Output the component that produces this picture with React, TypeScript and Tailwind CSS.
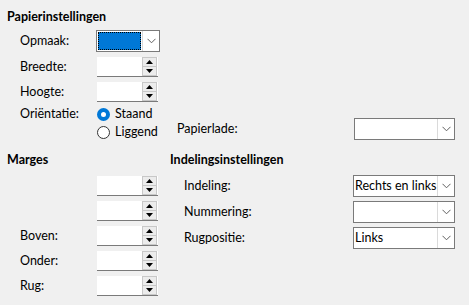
import React from "react";

function Chevron() {
  return (
    <svg width="9" height="6" viewBox="0 0 9 6" className="block">
      <path d="M0.5 0.8 L4.5 4.8 L8.5 0.8" fill="none" stroke="#606060" strokeWidth="1" />
    </svg>
  );
}

function Tri({ up }: { up?: boolean }) {
  return (
    <svg width="7" height="4" viewBox="0 0 7 4" className="block">
      {up ? <path d="M0 4 L3.5 0 L7 4 Z" fill="#000" /> : <path d="M0 0 L3.5 4 L7 0 Z" fill="#000" />}
    </svg>
  );
}

function Spin() {
  return (
    <div className="flex h-[20px] w-[61px] bg-white border-b border-[#7a7a7a]">
      <div className="flex-1" />
      <div className="flex flex-col w-[15px] mr-[1px] gap-0">
        <div className="h-[10px] border border-[#c8c8c8] bg-[#ececec] flex items-center justify-center">
          <Tri up />
        </div>
        <div className="h-[9px] border border-t-0 border-[#c8c8c8] bg-[#ececec] flex items-center justify-center">
          <Tri />
        </div>
      </div>
    </div>
  );
}

function Combo({ w, text, focused }: { w: string; text?: string; focused?: boolean }) {
  return (
    <div className={`flex h-[22px] ${w} border border-[#7a7a7a] bg-white`}>
      {focused ? (
        <div className="flex-1 m-[1px] bg-[#0078d7] border border-dotted border-black" />
      ) : (
        <div className="flex-1 flex items-center pl-[1px] leading-none whitespace-nowrap overflow-hidden">{text}</div>
      )}
      <div className="w-[17px] border-l border-[#dadada] flex items-center justify-center">
        <Chevron />
      </div>
    </div>
  );
}

function Radio({ checked, label }: { checked?: boolean; label: string }) {
  return (
    <div className="flex items-center h-[18px] gap-[5px]">
      {checked ? (
        <div className="w-[13px] h-[13px] rounded-full border-[4px] border-[#0078d7] bg-white" />
      ) : (
        <div className="w-[13px] h-[13px] rounded-full border border-[#333] bg-white" />
      )}
      <span>{label}</span>
    </div>
  );
}

export default function App() {
  return (
    <div className="w-[469px] h-[305px] bg-[#f0f0f0] text-black text-[12.5px] leading-[16px] font-['Lato',sans-serif] overflow-hidden">
      <div className="pl-[7px] pt-[9px]">
        <div className="font-bold h-[16px]">Papierinstellingen</div>
        <div className="flex flex-col mt-[5px]">
          <div className="flex items-center h-[22px]">
            <div className="w-[89px] pl-[13px]">Opmaak:</div>
            <Combo w="w-[64px]" focused />
          </div>
          <div className="flex items-center h-[20px] mt-[5px]">
            <div className="w-[90px] pl-[13px]">Breedte:</div>
            <Spin />
          </div>
          <div className="flex items-center h-[20px] mt-[5px]">
            <div className="w-[90px] pl-[13px]">Hoogte:</div>
            <Spin />
          </div>
          <div className="flex mt-[3px]">
            <div className="w-[90px] pl-[13px] h-[18px] flex items-center">Oriëntatie:</div>
            <div className="flex flex-col w-[80px]">
              <Radio checked label="Staand" />
              <Radio label="Liggend" />
            </div>
            <div className="flex-1 flex items-center mt-[13px] h-[22px] pr-[14px]">
              <span>Papierlade:</span>
              <div className="ml-auto">
                <Combo w="w-[101px]" />
              </div>
            </div>
          </div>
        </div>
      </div>
      <div className="flex mt-[11px]">
        <div className="w-[170px] pl-[7px]">
          <div className="font-bold h-[16px]">Marges</div>
          <div className="flex flex-col gap-[5px] mt-[8px]">
            {["", "", "Boven:", "Onder:", "Rug:"].map((l, i) => (
              <div key={i} className="flex items-center h-[20px]">
                <div className="w-[90px] pl-[13px]">{l}</div>
                <Spin />
              </div>
            ))}
          </div>
        </div>
        <div className="flex-1 pr-[14px]">
          <div className="font-bold h-[16px]">Indelingsinstellingen</div>
          <div className="flex flex-col gap-[4px] mt-[7px]">
            {[
              ["Indeling:", "Rechts en links"],
              ["Nummering:", ""],
              ["Rugpositie:", "Links"],
            ].map(([l, t], i) => (
              <div key={i} className="flex items-center h-[22px]">
                <div className="pl-[14px]">{l}</div>
                <div className="ml-auto">
                  <Combo w="w-[102px]" text={t} />
                </div>
              </div>
            ))}
          </div>
        </div>
      </div>
    </div>
  );
}
